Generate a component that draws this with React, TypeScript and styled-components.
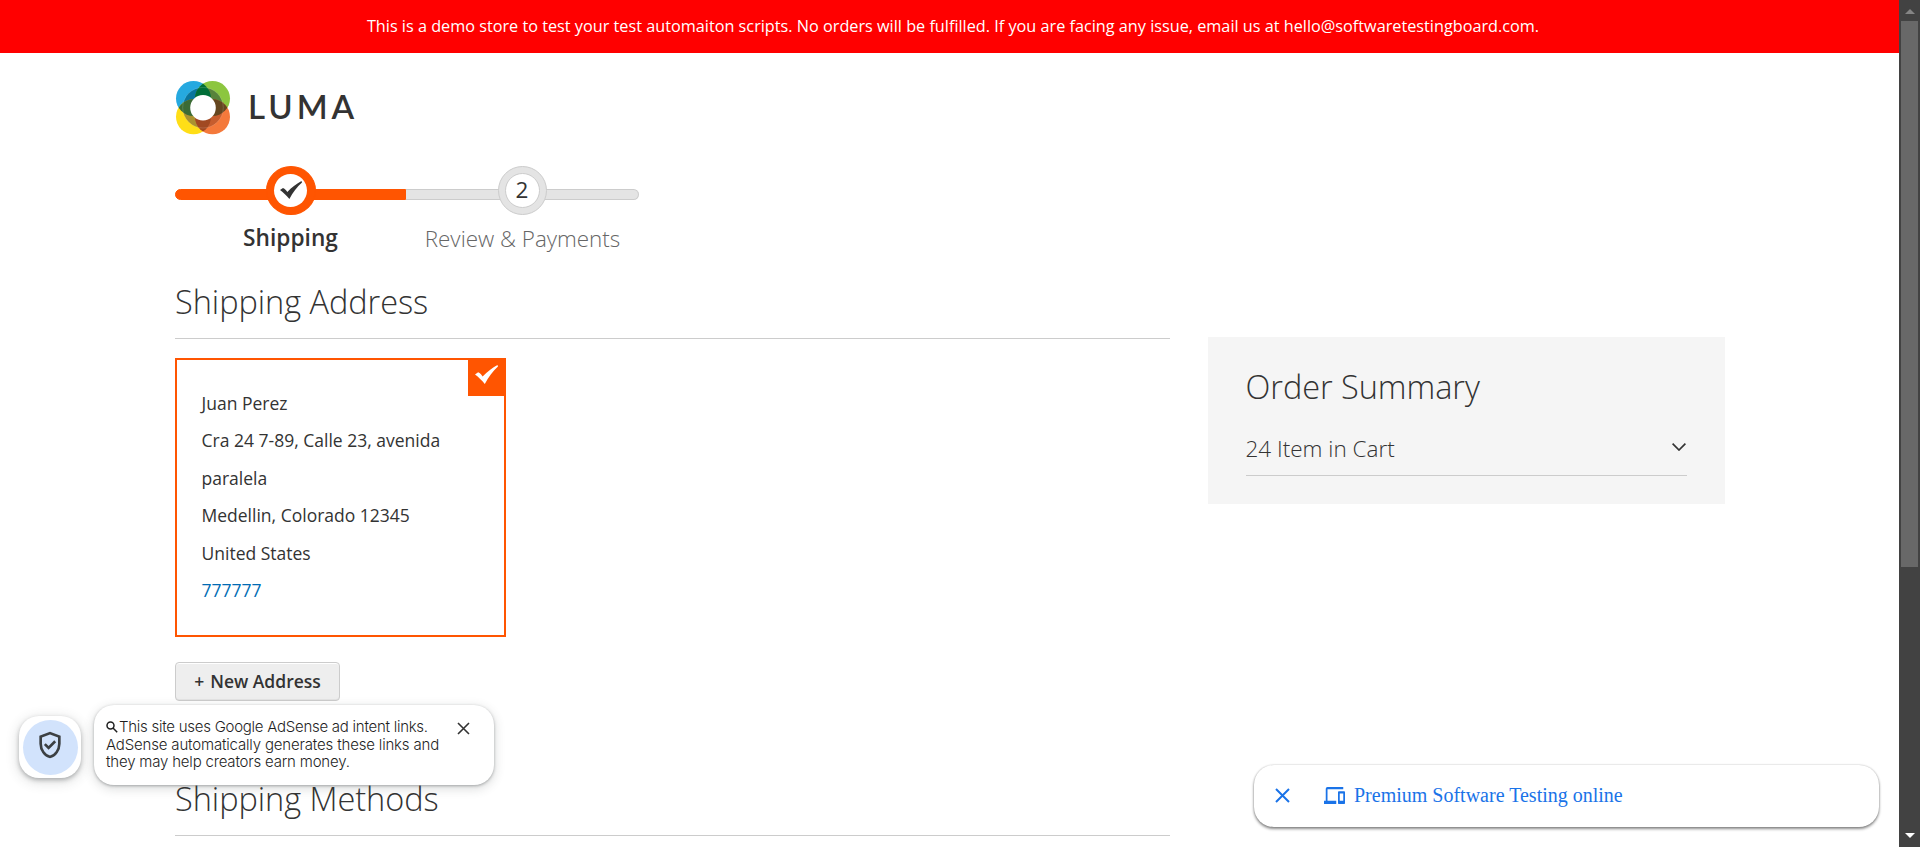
import React from "react";
import styled, { createGlobalStyle } from "styled-components";

const Global = createGlobalStyle`
  * { box-sizing: border-box; }
  body { margin: 0; background: #fff; overflow: hidden; }
`;

const Screen = styled.div`
  position: relative;
  display: flex;
  width: 1920px;
  height: 847px;
  overflow: hidden;
  color: #333;
  font-family: "Open Sans", "Noto Sans", sans-serif;
  font-size: 17.5px;
`;
const Page = styled.div`
  flex: 1;
  min-width: 0;
  overflow: hidden;
`;
const Banner = styled.div`
  height: 53px;
  padding-left: 7px;
  background: #f00;
  color: #fff;
  font-size: 16.24px;
  line-height: 52px;
  text-align: center;
  white-space: nowrap;
`;
const Container = styled.div`
  padding: 28px 174px 0 175px;
`;
const Logo = styled.div`
  display: flex;
  align-items: center;
  height: 54px;
`;
const Wordmark = styled.span`
  margin-left: 17px;
  font-family: Lato, sans-serif;
  font-weight: 600;
  font-size: 33px;
  line-height: 51px;
  height: 54px;
  letter-spacing: 4px;
`;
const Steps = styled.ol`
  display: flex;
  list-style: none;
  margin: 31px 0 0;
  padding: 0;
`;
const Step = styled.li<{ $active?: boolean }>`
  display: flex;
  flex-direction: column;
  align-items: center;
  width: ${(p) => (p.$active ? 231 : 233)}px;
  color: ${(p) => (p.$active ? "#333" : "#666")};
  font-size: ${(p) => (p.$active ? 22.7 : 22.4)}px;
  font-weight: ${(p) => (p.$active ? 550 : 300)};
  line-height: 30px;
  white-space: nowrap;
`;
const Track = styled.div<{ $active?: boolean }>`
  display: flex;
  align-items: center;
  justify-content: center;
  width: 100%;
  height: 11px;
  margin: 23px 0 ${(p) => (p.$active ? 23 : 24)}px;
  border: 1px solid ${(p) => (p.$active ? "#ff5501" : "#ccc")};
  border-width: ${(p) => (p.$active ? "1px" : "1px 1px 1px 0")};
  border-radius: ${(p) => (p.$active ? "6px 0 0 6px" : "0 6px 6px 0")};
  background: ${(p) => (p.$active ? "#ff5501" : "#e4e4e4")};
`;
const Ring = styled.div<{ $active?: boolean }>`
  display: flex;
  align-items: center;
  justify-content: center;
  flex: none;
  width: ${(p) => (p.$active ? 50 : 49)}px;
  height: 49px;
  margin-top: -8px;
  border: 1px solid ${(p) => (p.$active ? "#ff5501" : "#ccc")};
  border-radius: 50%;
  background: ${(p) => (p.$active ? "#ff5501" : "#e4e4e4")};
`;
const RingCore = styled.div<{ $active?: boolean }>`
  display: flex;
  align-items: center;
  justify-content: center;
  width: ${(p) => (p.$active ? 33 : 35)}px;
  height: ${(p) => (p.$active ? 33 : 35)}px;
  padding: ${(p) => (p.$active ? "0 0 1px 1px" : "0 0 2px")};
  border: ${(p) => (p.$active ? "0" : "1px solid #ccc")};
  border-radius: 50%;
  background: #fff;
  color: #333;
  font-size: 22.5px;
  font-weight: 500;
  line-height: 30px;
`;
const Columns = styled.div`
  display: flex;
  justify-content: space-between;
  align-items: flex-start;
`;
const Main = styled.main`
  width: 995px;
`;
const Title = styled.h2<{ $gap?: number }>`
  margin: ${(p) => p.$gap || 0}px 0 0;
  height: 57px;
  border-bottom: 1px solid #ccc;
  font-size: 32.5px;
  font-weight: 300;
  line-height: 40px;
  letter-spacing: -0.04px;
  white-space: nowrap;
`;
const AddressCard = styled.section`
  position: relative;
  width: 331px;
  height: 279px;
  margin-top: 19px;
  padding: 24.8px 24.5px;
  border: 2px solid #ff5501;
  line-height: 37.5px;
  white-space: nowrap;
`;
const Selected = styled.div`
  position: absolute;
  top: -2px;
  right: -2px;
  width: 38px;
  height: 38px;
  padding: 7px 0 0 7px;
  background: #ff5501;
`;
const Phone = styled.a`
  color: #006bb4;
  text-decoration: none;
`;
const NewAddress = styled.button`
  display: flex;
  justify-content: center;
  gap: 6px;
  width: 165px;
  height: 39px;
  margin-top: 25px;
  padding: 0;
  border: 1px solid #ccc;
  border-radius: 4px;
  background: #eee;
  box-shadow: inset 0 1px 0 #fff, inset 0 -1px 0 rgba(204, 204, 204, 0.3);
  color: #333;
  font: 560 17.5px/36px "Open Sans", sans-serif;
  white-space: nowrap;
`;
const Summary = styled.aside`
  width: 517px;
  height: 167px;
  margin-top: 83px;
  padding: 30px 38px 0 37.5px;
  background: #f5f5f5;
`;
const SummaryTitle = styled.h3`
  margin: 0;
  font-size: 32.5px;
  font-weight: 300;
  line-height: 40px;
  letter-spacing: -0.04px;
`;
const SummaryRow = styled.div`
  display: flex;
  justify-content: space-between;
  align-items: center;
  height: 69px;
  padding: 14px 1px 0 0;
  border-bottom: 1px solid #ccc;
  font-size: 22.5px;
  font-weight: 300;
`;
const Chevron = styled.svg`
  margin-bottom: 2px;
`;
const Shield = styled.div`
  position: absolute;
  left: 19px;
  top: 716px;
  display: flex;
  align-items: center;
  justify-content: center;
  width: 62px;
  height: 62px;
  border-radius: 20px;
  background: #fff;
  box-shadow: 0 2px 4px rgba(60, 64, 67, 0.35), 0 3px 12px 2px rgba(60, 64, 67, 0.15);
`;
const ShieldDisc = styled.div`
  display: flex;
  align-items: center;
  justify-content: center;
  width: 55px;
  height: 55px;
  padding-bottom: 5px;
  border-radius: 50%;
  background: #d2e3fc;
`;
const Notice = styled.div`
  position: absolute;
  left: 94px;
  top: 705px;
  display: flex;
  justify-content: space-between;
  width: 400px;
  height: 80px;
  padding: 13px 24px 0 12px;
  border-radius: 20px;
  background: #fff;
  box-shadow: 0 1px 3px rgba(60, 64, 67, 0.4), 0 3px 10px 2px rgba(60, 64, 67, 0.15);
  color: #1f1f1f;
  font-family: Inter, Roboto, sans-serif;
  font-size: 15px;
  font-weight: 300;
  line-height: 17.6px;
  white-space: nowrap;
`;
const NoticeLine = styled.div<{ $track: number }>`
  display: flex;
  align-items: center;
  letter-spacing: ${(p) => p.$track}px;
`;
const NoticeClose = styled.svg`
  margin-top: 4px;
`;
const AdBar = styled.div`
  position: absolute;
  left: 1254px;
  top: 765px;
  display: flex;
  align-items: center;
  width: 625px;
  height: 62px;
  padding-left: 21px;
  border-radius: 20px;
  background: #fff;
  box-shadow: 0 2px 3px rgba(0, 0, 0, 0.45), 0 0 2px rgba(0, 0, 0, 0.25);
  color: #1a73e8;
  font-family: "Liberation Serif", serif;
  font-size: 20px;
`;
const AdClose = styled.svg`
  margin-bottom: 1px;
`;
const AdText = styled.span`
  margin: 0 0 1px 9px;
  white-space: nowrap;
`;
const DevicesIcon = styled.svg`
  margin: 0 0 1px 34px;
`;
const Scrollbar = styled.div`
  display: flex;
  flex-direction: column;
  align-items: center;
  width: 21px;
  height: 847px;
  padding: 9px 0 9px;
  background: #424242;
`;
const Thumb = styled.div`
  width: 17px;
  height: 546px;
  margin: 7px 0 auto;
  background: #686868;
`;

const Check = ({ color, w, h }: { color: string; w: number; h: number }) => (
  <svg width={w} height={h} viewBox="0 0 22 19" preserveAspectRatio="none" display="block">
    <path d="M0 9.6 3 7.3C5 8.3 6.2 9.8 7.3 11.6 12 6.5 16.5 2.8 21.5 0L22 1.5C17 6.2 12.8 12 9.4 19 6.5 15.5 3.5 12.3 0 9.6Z" fill={color} />
  </svg>
);

const LogoMark = () => (
  <svg width="56" height="54" viewBox="0 0 56 54">
    <defs>
      <clipPath id="blue"><circle cx="18.5" cy="17.5" r="17.5" /></clipPath>
      <clipPath id="yellow"><circle cx="18.5" cy="35.8" r="17.5" /></clipPath>
      <clipPath id="green"><circle cx="37.5" cy="17.5" r="17.5" /></clipPath>
      <clipPath id="orange"><circle cx="37.5" cy="35.8" r="17.5" /></clipPath>
    </defs>
    <circle cx="18.5" cy="17.5" r="17.5" fill="#26a9e0" />
    <circle cx="37.5" cy="17.5" r="17.5" fill="#8cc63f" />
    <circle cx="18.5" cy="35.8" r="17.5" fill="#ffde17" />
    <circle cx="37.5" cy="35.8" r="17.5" fill="#f4793b" />
    <circle cx="28" cy="26.7" r="20.3" fill="#0a759d" clipPath="url(#blue)" />
    <circle cx="28" cy="26.7" r="20.3" fill="#58833b" clipPath="url(#green)" />
    <circle cx="28" cy="26.7" r="20.3" fill="#aa9230" clipPath="url(#yellow)" />
    <circle cx="28" cy="26.7" r="20.3" fill="#c65d2e" clipPath="url(#orange)" />
    <g clipPath="url(#blue)">
      <circle cx="37.5" cy="17.5" r="17.5" fill="#006e38" />
      <circle cx="18.5" cy="35.8" r="17.5" fill="#3b6b35" />
    </g>
    <g clipPath="url(#orange)">
      <circle cx="37.5" cy="17.5" r="17.5" fill="#65461f" />
      <circle cx="18.5" cy="35.8" r="17.5" fill="#a14922" />
    </g>
    <circle cx="28" cy="26.7" r="20.3" fill="none" stroke="#fff" strokeOpacity=".25" strokeWidth=".6" />
    <circle cx="28" cy="26.7" r="12.8" fill="#fff" />
  </svg>
);

export default function App() {
  return (
    <Screen>
      <Global />
      <Page>
        <Banner>
          This is a demo store to test your test automaiton scripts. No orders will be fulfilled. If you are facing any issue, email us at hello@softwaretestingboard.com.
        </Banner>
        <Container>
          <Logo>
            <LogoMark />
            <Wordmark>LUMA</Wordmark>
          </Logo>
          <Steps>
            <Step $active>
              <Track $active>
                <Ring $active>
                  <RingCore $active><Check color="#333" w={22} h={18} /></RingCore>
                </Ring>
              </Track>
              Shipping
            </Step>
            <Step>
              <Track>
                <Ring><RingCore>2</RingCore></Ring>
              </Track>
              Review &amp; Payments
            </Step>
          </Steps>
          <Columns>
            <Main>
              <Title $gap={28}>Shipping Address</Title>
              <AddressCard>
                Juan Perez<br />
                Cra 24 7-89, Calle 23, avenida<br />
                paralela<br />
                Medellin, Colorado 12345<br />
                United States<br />
                <Phone>777777</Phone>
                <Selected><Check color="#fff" w={23} h={19} /></Selected>
              </AddressCard>
              <NewAddress><span>+</span><span>New Address</span></NewAddress>
              <Title $gap={78}>Shipping Methods</Title>
            </Main>
            <Summary>
              <SummaryTitle>Order Summary</SummaryTitle>
              <SummaryRow>
                24 Item in Cart
                <Chevron width="14" height="8" viewBox="0 0 14 8" fill="none" stroke="#333" strokeWidth="1.7">
                  <path d="M.6.7 7 7 13.4.7" />
                </Chevron>
              </SummaryRow>
            </Summary>
          </Columns>
        </Container>
      </Page>
      <Scrollbar>
        <svg width="10" height="5"><path d="M0 5 5 0l5 5z" fill="#858585" /></svg>
        <Thumb />
        <svg width="10" height="5"><path d="M0 0h10L5 5z" fill="#fff" /></svg>
      </Scrollbar>

      <Shield>
        <ShieldDisc>
          <svg width="32" height="32" viewBox="0 0 24 24" fill="#3c4043">
            <path d="m10.94 15.54 5.66-5.64-1.42-1.42-4.24 4.24-2.1-2.1-1.42 1.42ZM12 22q-3.47-.88-5.74-3.99T4 11.1V5l8-3 8 3v6.1q0 3.8-2.26 6.91T12 22Zm0-2.1q2.6-.83 4.3-3.3T18 11.1V6.38l-6-2.25-6 2.25v4.72q0 3.03 1.7 5.5t4.3 3.3Z" />
          </svg>
        </ShieldDisc>
      </Shield>
      <Notice>
        <div>
          <NoticeLine $track={-0.26}>
            <svg width="13" height="12" viewBox="0 0 13 12" fill="none" stroke="#1f1f1f" strokeWidth="1.5">
              <circle cx="4.5" cy="4.5" r="3.5" />
              <path d="m7 7 4.2 4.2" />
            </svg>
            This site uses Google AdSense ad intent links.
          </NoticeLine>
          <NoticeLine $track={-0.17}>AdSense automatically generates these links and</NoticeLine>
          <NoticeLine $track={-0.19}>they may help creators earn money.</NoticeLine>
        </div>
        <NoticeClose width="13" height="13" viewBox="0 0 13 13" stroke="#333" strokeWidth="1.6">
          <path d="M1 1l11 11M12 1L1 12" />
        </NoticeClose>
      </Notice>
      <AdBar>
        <AdClose width="15" height="15" viewBox="0 0 15 15" stroke="#1a73e8" strokeWidth="2">
          <path d="M1 1l13 13M14 1L1 14" />
        </AdClose>
        <DevicesIcon width="21" height="17" viewBox="0 4 24 16" preserveAspectRatio="none" fill="#1a73e8">
          <path d="M4 6h18V4H4c-1.1 0-2 .9-2 2v11H0v3h14v-3H4V6zm19 2h-6c-.55 0-1 .45-1 1v10c0 .55.45 1 1 1h6c.55 0 1-.45 1-1V9c0-.55-.45-1-1-1zm-1 9h-4v-7h4v7z" />
        </DevicesIcon>
        <AdText>Premium Software Testing online</AdText>
      </AdBar>
    </Screen>
  );
}
